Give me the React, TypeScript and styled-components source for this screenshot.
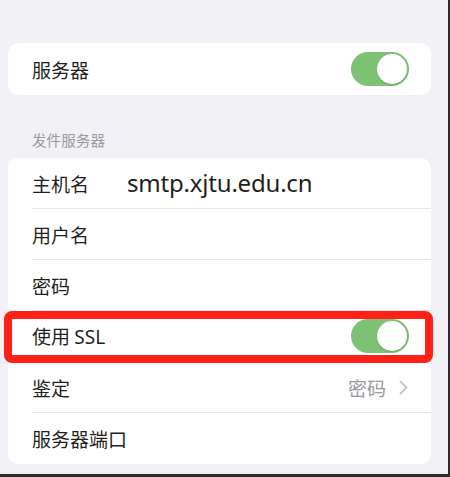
import React, { FC } from 'react';
import styled, { createGlobalStyle } from 'styled-components';

const GlobalStyle = createGlobalStyle`
  html, body {
    margin: 0;
    padding: 0;
  }
  body {
    font-family: "Noto Sans", "Noto Sans CJK SC", sans-serif;
    -webkit-font-smoothing: antialiased;
  }
`;

const StyledFrame = styled.div`
  width: 450px;
  height: 477px;
  background-color: #2b2b2d;
  overflow: hidden;
`;

const StyledScreen = styled.div`
  width: 448px;
  height: 474px;
  box-sizing: border-box;
  padding: 43px 17px 0 8px;
  background-color: #f1f1f6;
  display: flex;
  flex-direction: column;
`;

const StyledCard = styled.div`
  background-color: #fff;
  border-radius: 10px;
  display: flex;
  flex-direction: column;
`;

const StyledSectionTitle = styled.div`
  margin: 36px 0 9px 24px;
  font-family: "Noto Sans CJK SC", sans-serif;
  font-size: 14.6px;
  line-height: 18px;
  color: #9a9a9f;
`;

const StyledRow = styled.div<{ $height: number }>`
  position: relative;
  display: flex;
  height: ${({ $height }) => $height}px;
  padding-left: 24px;
`;

const StyledRowBody = styled.div<{ $divider: boolean }>`
  flex: 1;
  display: flex;
  align-items: center;
  padding-right: 22px;
  border-bottom: ${({ $divider }) => ($divider ? '1px solid #e6e6ea' : 'none')};
`;

const StyledLabel = styled.span<{ $wide?: boolean }>`
  font-family: "Noto Sans CJK SC", sans-serif;
  font-size: 19px;
  color: #1f1f21;
  min-width: ${({ $wide }) => ($wide ? '95px' : 'auto')};
  white-space: nowrap;
`;

const StyledLatin = styled.span`
  font-family: "Noto Sans", sans-serif;
  font-size: 19px;
`;

const StyledHost = styled.span`
  font-family: "Noto Sans", sans-serif;
  font-size: 24px;
  color: #1f1f21;
  letter-spacing: -0.2px;
  margin-top: -2px;
`;

const StyledDetail = styled.div`
  margin-left: auto;
  display: flex;
  align-items: center;
  gap: 13px;
  padding-right: 1px;
  font-family: "Noto Sans CJK SC", sans-serif;
  font-size: 19px;
  color: #98989d;
`;

const StyledToggle = styled.div`
  margin-left: auto;
  width: 58px;
  height: 34px;
  border-radius: 17px;
  background-color: #7cc174;
  display: flex;
  align-items: center;
  justify-content: flex-end;
  padding: 0 2px;
  box-sizing: border-box;
`;

const StyledKnob = styled.div`
  width: 30px;
  height: 30px;
  border-radius: 50%;
  background-color: #fff;
  box-shadow: 0 1px 2px rgba(0, 0, 0, 0.12);
`;

const StyledHighlight = styled.div`
  position: absolute;
  top: 0;
  bottom: -1px;
  left: -4px;
  right: -2px;
  border: 8px solid #ff2118;
  border-radius: 8px;
  pointer-events: none;
`;

const Toggle: FC = () => (
  <StyledToggle>
    <StyledKnob />
  </StyledToggle>
);

const Chevron: FC = () => (
  <svg width="9" height="15" viewBox="0 0 9 15" fill="none">
    <path d="M1.5 1.5 L7.5 7.5 L1.5 13.5" stroke="#c4c4c8" strokeWidth="1.8" strokeLinecap="round" strokeLinejoin="round" />
  </svg>
);

export default function App() {
  return (
    <>
      <GlobalStyle />
      <StyledFrame>
        <StyledScreen>
          <StyledCard>
            <StyledRow $height={52}>
              <StyledRowBody $divider={false}>
                <StyledLabel>服务器</StyledLabel>
                <Toggle />
              </StyledRowBody>
            </StyledRow>
          </StyledCard>

          <StyledSectionTitle>发件服务器</StyledSectionTitle>

          <StyledCard>
            <StyledRow $height={51}>
              <StyledRowBody $divider>
                <StyledLabel $wide>主机名</StyledLabel>
                <StyledHost>smtp.xjtu.edu.cn</StyledHost>
              </StyledRowBody>
            </StyledRow>
            <StyledRow $height={51}>
              <StyledRowBody $divider>
                <StyledLabel>用户名</StyledLabel>
              </StyledRowBody>
            </StyledRow>
            <StyledRow $height={51}>
              <StyledRowBody $divider>
                <StyledLabel>密码</StyledLabel>
              </StyledRowBody>
            </StyledRow>
            <StyledRow $height={51}>
              <StyledRowBody $divider>
                <StyledLabel>
                  使用 <StyledLatin>SSL</StyledLatin>
                </StyledLabel>
                <Toggle />
              </StyledRowBody>
              <StyledHighlight />
            </StyledRow>
            <StyledRow $height={51}>
              <StyledRowBody $divider>
                <StyledLabel>鉴定</StyledLabel>
                <StyledDetail>
                  密码
                  <Chevron />
                </StyledDetail>
              </StyledRowBody>
            </StyledRow>
            <StyledRow $height={51}>
              <StyledRowBody $divider={false}>
                <StyledLabel>服务器端口</StyledLabel>
              </StyledRowBody>
            </StyledRow>
          </StyledCard>
        </StyledScreen>
      </StyledFrame>
    </>
  );
}
